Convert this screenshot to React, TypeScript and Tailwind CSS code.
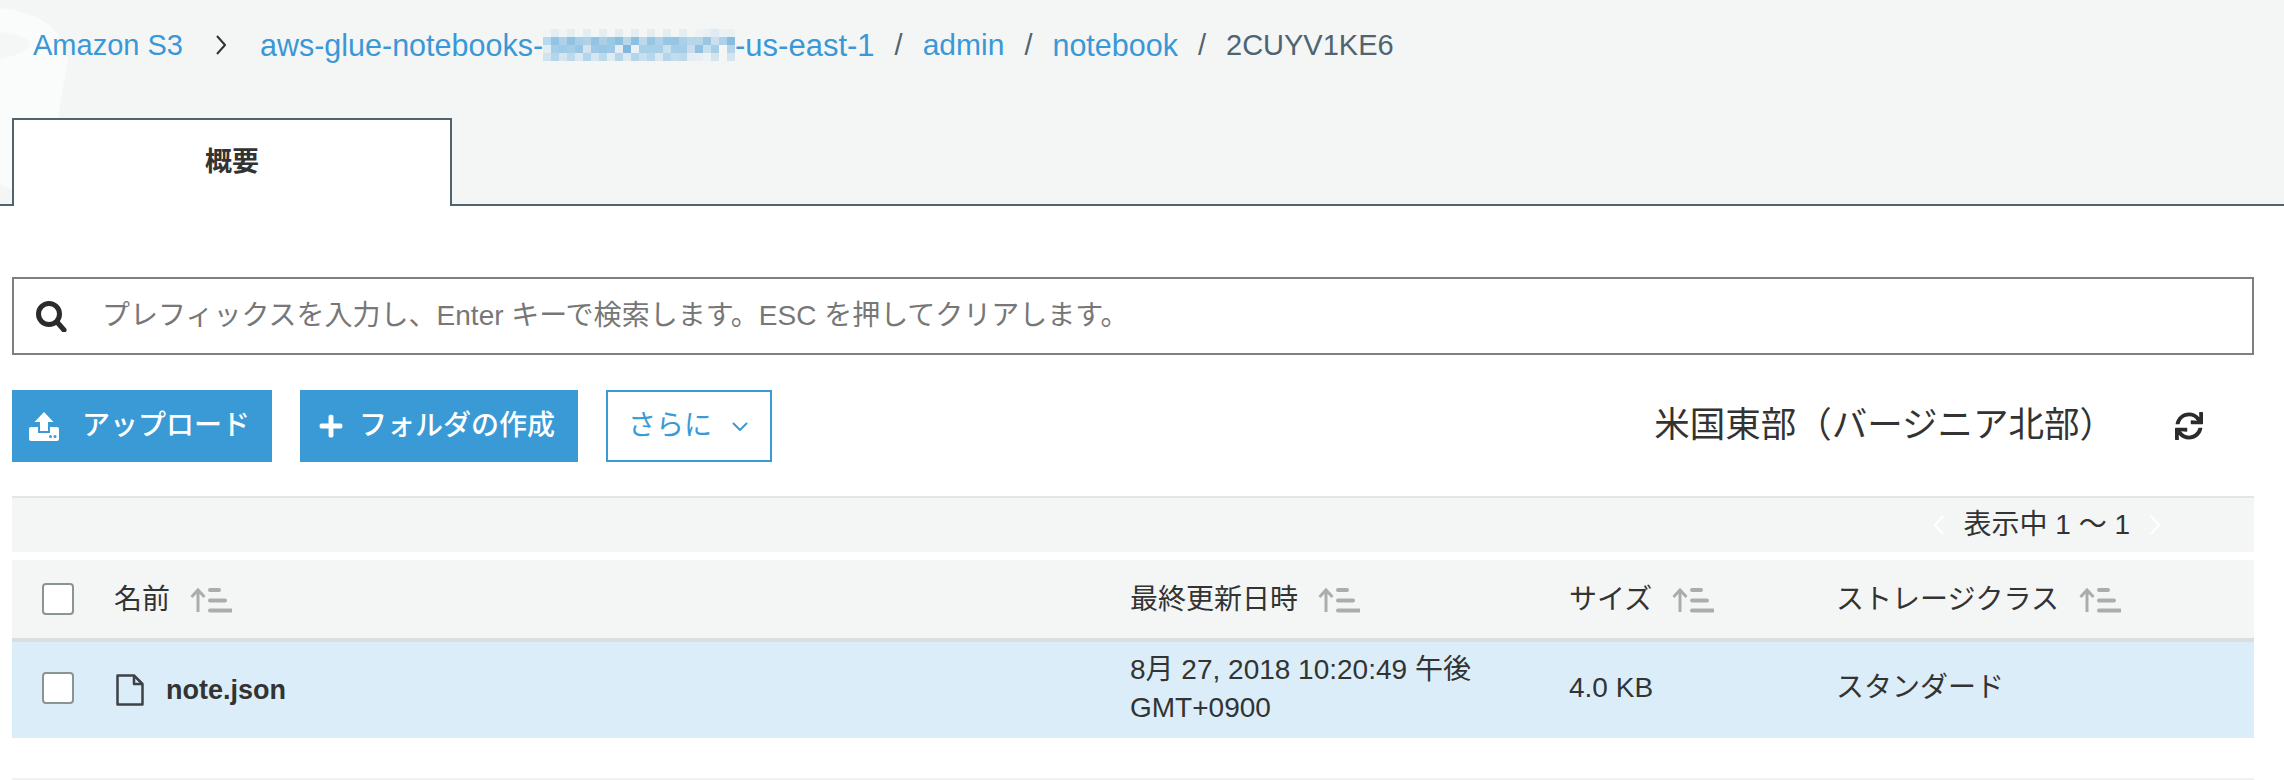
import { FaSync, FaPlus } from "react-icons/fa";

const mosaic = [
  ["#f0f4f6","#e3eef3","#f0f4f6","#e3eef3","#f3f6f6","#e3eef3","#f3f6f6","#e3eef3","#f3f6f6","#e3eef3","#f4f6f6","#e3eef3","#f4f6f6","#e3eef3","#f4f6f6","#e3eef3","#f4f6f6","#e3eef3","#f4f6f6","#eef2f5","#e9f0f4","#dfebf3","#eaf1f4","#eaf1f4"],
  ["#b8d8ec","#93c4e3","#acd1e8","#90c2e2","#a9cfe8","#b0d2e9","#94c4e4","#accfe7","#9ac8e5","#8cc0e1","#bad7ea","#8cc0e1","#bdd8ea","#96c6e3","#b0d2e8","#96c6e4","#96c6e4","#acd0e8","#b8d6eb","#b6d6ea","#9ac5e3","#cbe0ee","#aed0e8","#88bde0"],
  ["#e1edf4","#a5cde7","#a0cbe6","#a5cde7","#98c6e4","#d3e4ef","#9ec9e6","#98c6e4","#9ec9e6","#e6edf2","#7fb8de","#eaf0f3","#a8cfe8","#a8cfe8","#a8cfe8","#c9e0ee","#a5cde7","#a5cde7","#cbdded","#90c0e2","#c6e0ee","#a9cfe8","#f4f6f6","#b5d5ea"],
  ["#d0e3ef","#b5d6ea","#d3e5f0","#bcd9eb","#dbe8f1","#b3d5ea","#d6e6f0","#bcd9eb","#e0ebf2","#b5d6ea","#dce9f1","#b3d5ea","#c9deee","#b9d7ea","#d8e7f0","#b5d6ea","#c4dded","#bcd9eb","#e4edf3","#e8eff4","#edf2f5","#d3e4ef","#f4f6f6","#d3e4ef"],
];

function SortIcon() {
  return (
    <svg width="42" height="26" viewBox="0 0 42 26" className="ml-[20px] shrink-0 text-[#a9adad]" fill="none" stroke="currentColor">
      <path d="M8 25V3M1.5 10L8 3l6.500 7" strokeWidth="3" />
      <path d="M20 3h9M20 13.500h15M20 23.500h21" strokeWidth="4" strokeLinecap="round" />
    </svg>
  );
}

function Checkbox() {
  return <div className="h-8 w-8 rounded-[4px] border-2 border-[#8a9396] bg-white" />;
}

function HeaderCell({ label }: { label: string }) {
  return (
    <div className="flex items-center pt-[2px]">
      <span>{label}</span>
      <SortIcon />
    </div>
  );
}

export default function App() {
  return (
    <div className="h-[780px] w-[2284px] overflow-hidden bg-white text-[#333] font-['Liberation_Sans','Noto_Sans_CJK_JP',sans-serif]">
      {/* Breadcrumb + tab */}
      <header className="relative h-[206px] border-b-2 border-[#4f6470] bg-[#f4f6f6]">
        <svg width="80" height="204" viewBox="0 0 80 204" className="absolute left-0 top-0" fill="none">
          <path d="M0 8C30 12 60 20 68 58L58 118H12V190L0 184Z" fill="#fafbfb" />
          <path d="M0 32C15 34 30 38 30 44C30 50 15 56 0 59Z" fill="#f5f7f7" />
        </svg>
        <nav className="relative flex h-[88px] items-center pl-[33px] pt-[2px] text-[29px] leading-none">
          <a className="text-[#3a98d6]">Amazon S3</a>
          <svg width="10" height="20" viewBox="0 0 10 20" className="ml-[33px] mr-[34px]" fill="none" stroke="#333" strokeWidth="2">
            <path d="M1 1l8 9-8 9" />
          </svg>
          <a className="text-[30.5px] text-[#3a98d6]">aws-glue-notebooks-</a>
          <div className="grid grid-cols-[repeat(24,8px)] grid-rows-[repeat(4,8px)]">
            {mosaic.flat().map((color, i) => (
              <div key={i} style={{ backgroundColor: color }} />
            ))}
          </div>
          <a className="text-[31px] text-[#3a98d6]">-us-east-1</a>
          <span className="mx-[20px] text-[#4f6470]">/</span>
          <a className="text-[30px] text-[#3a98d6]">admin</a>
          <span className="mx-[20px] text-[#4f6470]">/</span>
          <a className="text-[30.5px] text-[#3a98d6]">notebook</a>
          <span className="mx-[20px] text-[#4f6470]">/</span>
          <span className="text-[#4f6470]">2CUYV1KE6</span>
        </nav>
        <div className="relative ml-[12px] mt-[30px] flex h-[88px] w-[440px] items-center justify-center border-2 border-b-0 border-[#4f6470] bg-white pb-[2px] text-[27px] font-bold">
          概要
        </div>
      </header>

      <main className="ml-[12px] mr-[30px]">
        {/* Search */}
        <div className="mt-[71px] flex h-[78px] items-center border-2 border-[#7f7f7f] pl-[21px] text-[28px] text-[#777]">
          <svg width="32" height="32" viewBox="0 0 32 32" fill="none" stroke="#2b2b2b" strokeWidth="5">
            <circle cx="14" cy="14" r="10.500" />
            <path d="M22 22l7 8" strokeLinecap="round" />
          </svg>
          <span className="ml-[35px]">プレフィックスを入力し、Enter キーで検索します。ESC を押してクリアします。</span>
        </div>

        {/* Toolbar */}
        <div className="mt-[35px] flex h-[72px] items-stretch text-[28px]">
          <button className="flex w-[260px] items-center bg-[#3a9ad6] pl-[17px] font-medium text-white">
            <svg width="30" height="29" viewBox="0 0 30 29" fill="white">
              <path d="M15 0l9.500 10H19v9h-8v-9H5.500Z" />
              <path d="M2 15h7v6h12v-6h7a2 2 0 0 1 2 2v10a2 2 0 0 1-2 2H2a2 2 0 0 1-2-2V17a2 2 0 0 1 2-2Z" />
              <circle cx="21.500" cy="24.500" r="1.500" fill="#3a9ad6" />
              <circle cx="26" cy="24.500" r="1.500" fill="#3a9ad6" />
            </svg>
            <span className="ml-[23px]">アップロード</span>
          </button>
          <button className="ml-[28px] flex w-[278px] items-center bg-[#3a9ad6] pl-[18px] font-medium text-white">
            <FaPlus size={26} />
            <span className="ml-[15px]">フォルダの作成</span>
          </button>
          <button className="ml-[28px] flex w-[166px] items-center border-2 border-[#3a9ad6] bg-white pl-[20px] text-[#3a9ad6]">
            <span>さらに</span>
            <svg width="16" height="9" viewBox="0 0 16 9" className="ml-[20px]" fill="none" stroke="currentColor" strokeWidth="2">
              <path d="M1 1l7 7 7-7" />
            </svg>
          </button>
          <div className="ml-auto flex items-center text-[35.5px] leading-none">
            <span>米国東部（バージニア北部）</span>
            <FaSync size={28} className="ml-[60px] mr-[51px] text-[#2b2b2b]" />
          </div>
        </div>

        {/* Pagination */}
        <div className="mt-[34px] flex h-[56px] items-center justify-end border-t-2 border-[#e3e5e5] bg-[#f4f6f6] pr-[94px] text-[28px]">
          <svg width="10" height="20" viewBox="0 0 10 20" fill="none" stroke="white" strokeWidth="2">
            <path d="M9 1L1 10l8 9" />
          </svg>
          <span className="mx-[20px]">表示中 1 〜 1</span>
          <svg width="10" height="20" viewBox="0 0 10 20" fill="none" stroke="white" strokeWidth="2">
            <path d="M1 1l8 9-8 9" />
          </svg>
        </div>

        {/* Table */}
        <div className="mt-[8px] text-[28px]">
          <div className="grid h-[82px] grid-cols-[102px_1016px_439px_267px_1fr] items-center border-b-4 border-[#dcdddd] bg-[#f4f6f6]">
            <div className="pl-[30px]">
              <Checkbox />
            </div>
            <HeaderCell label="名前" />
            <HeaderCell label="最終更新日時" />
            <HeaderCell label="サイズ" />
            <HeaderCell label="ストレージクラス" />
          </div>
          <div className="grid h-[96px] grid-cols-[102px_1016px_439px_267px_1fr] items-center bg-[#dbedf8]">
            <div className="pl-[30px] pb-[4px]">
              <Checkbox />
            </div>
            <div className="flex items-center pl-[2px]">
              <svg width="28" height="32" viewBox="0 0 28 32" fill="none" stroke="#3c4245" strokeWidth="2.500" strokeLinejoin="round">
                <path d="M1.500 1.500H18L26.500 10V30.500H1.500Z" />
                <path d="M18 1.500V10H26.500" />
              </svg>
              <span className="ml-[22px] text-[27px] font-bold">note.json</span>
            </div>
            <div className="pb-[2px] leading-[38px]">
              <div>8月 27, 2018 10:20:49 午後</div>
              <div>GMT+0900</div>
            </div>
            <div className="pb-[4px]">4.0 KB</div>
            <div className="pb-[4px]">スタンダード</div>
          </div>
        </div>
      </main>
      <div className="ml-[12px] mr-[30px] mt-[40px] h-[2px] bg-[#f0f2f2]" />
    </div>
  );
}
